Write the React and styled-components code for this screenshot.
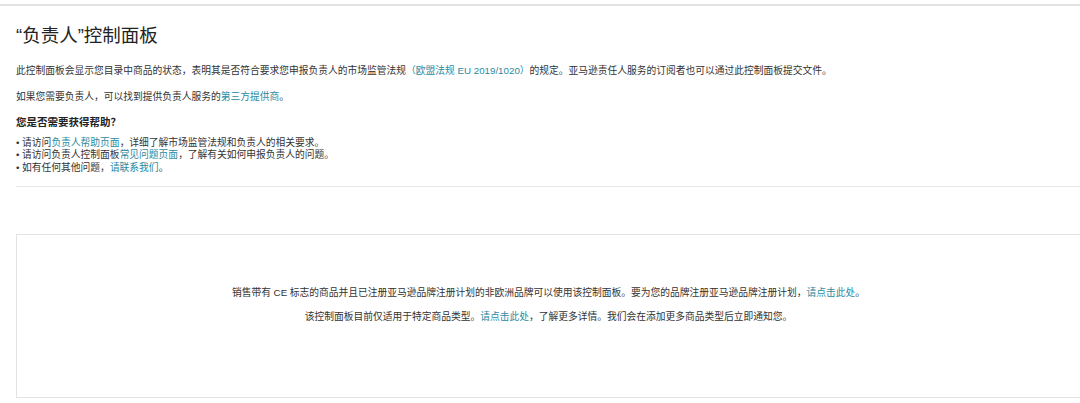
import React from "react";
import styled, { createGlobalStyle } from "styled-components";

const Global = createGlobalStyle`
  html, body { margin: 0; padding: 0; background: #fff; overflow: hidden; }
  body {
    font-family: "Liberation Sans", "Noto Sans CJK SC", sans-serif;
    color: #333;
    width: 1080px;
  }
`;

const TopBar = styled.div`
  height: 4px;
  border-bottom: 2px solid #e3e3e3;
`;

const Content = styled.div`
  padding-left: 16px;
`;

const Title = styled.h1`
  margin: 17px 0 0;
  font-size: 18.5px;
  line-height: 26px;
  font-weight: 400;
  color: #222;
`;

const Para = styled.p`
  margin: ${(p) => p.$top}px 0 0;
  font-size: 9.75px;
  line-height: 14px;
  white-space: nowrap;
`;

const Link = styled.a`
  color: #2a8aa2;
  text-decoration: none;
`;

const HelpHeading = styled.h2`
  margin: 10.5px 0 0;
  font-size: 10.5px;
  line-height: 14px;
  font-weight: 700;
  color: #222;
`;

const List = styled.ul`
  margin: 8px 0 0;
  padding: 0;
  list-style: none;
`;

const Item = styled.li`
  font-size: 9.75px;
  line-height: 12.6px;
  white-space: nowrap;
`;

const Rule = styled.hr`
  margin: 12px 0 0;
  border: 0;
  border-top: 1px solid #e6e6e6;
`;

const Notice = styled.div`
  margin: 47px -1px 0 0;
  height: 162px;
  border: 1px solid #e3e3e3;
  display: flex;
  flex-direction: column;
  align-items: center;
`;

const NoticeLine = styled.p`
  margin: ${(p) => p.$top}px 0 0;
  font-size: 9.75px;
  line-height: 14px;
  white-space: nowrap;
  text-align: center;
`;

export default function App() {
  return (
    <>
      <Global />
      <TopBar />
      <Content>
        <Title>“负责人”控制面板</Title>
        <Para $top={15}>
          此控制面板会显示您目录中商品的状态，表明其是否符合要求您申报负责人的市场监管法规
          <Link href="#">（欧盟法规 EU 2019/1020）</Link>
          的规定。亚马逊责任人服务的订阅者也可以通过此控制面板提交文件。
        </Para>
        <Para $top={12}>
          如果您需要负责人，可以找到提供负责人服务的<Link href="#">第三方提供商</Link>。
        </Para>
        <HelpHeading>您是否需要获得帮助？</HelpHeading>
        <List>
          <Item>
            • 请访问<Link href="#">负责人帮助页面</Link>，详细了解市场监管法规和负责人的相关要求。
          </Item>
          <Item>
            • 请访问负责人控制面板<Link href="#">常见问题页面</Link>，了解有关如何申报负责人的问题。
          </Item>
          <Item>
            • 如有任何其他问题，<Link href="#">请联系我们</Link>。
          </Item>
        </List>
        <Rule />
        <Notice>
          <NoticeLine $top={51}>
            销售带有 CE 标志的商品并且已注册亚马逊品牌注册计划的非欧洲品牌可以使用该控制面板。要为您的品牌注册亚马逊品牌注册计划，
            <Link href="#">请点击此处</Link>。
          </NoticeLine>
          <NoticeLine $top={10}>
            该控制面板目前仅适用于特定商品类型。<Link href="#">请点击此处</Link>，了解更多详情。我们会在添加更多商品类型后立即通知您。
          </NoticeLine>
        </Notice>
      </Content>
    </>
  );
}
